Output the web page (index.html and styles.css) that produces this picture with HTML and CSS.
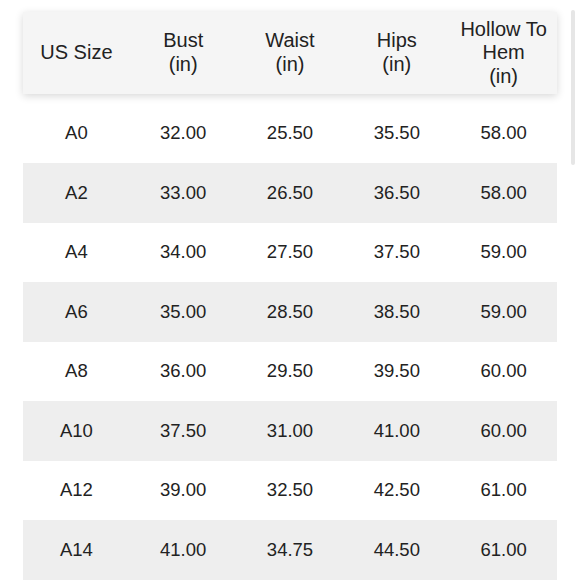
FILE: index.html
```html
<!DOCTYPE html>
<html>
<head>
<meta charset="utf-8">
<link rel="stylesheet" href="styles.css">
</head>
<body>
<div class="page">
  <div class="chart">
    <div class="row head">
      <div class="cell">US Size</div>
      <div class="cell">Bust<br>(in)</div>
      <div class="cell">Waist<br>(in)</div>
      <div class="cell">Hips<br>(in)</div>
      <div class="cell">Hollow To<br>Hem<br>(in)</div>
    </div>
    <div class="body">
      <div class="row"><div class="cell">A0</div><div class="cell">32.00</div><div class="cell">25.50</div><div class="cell">35.50</div><div class="cell">58.00</div></div>
      <div class="row alt"><div class="cell">A2</div><div class="cell">33.00</div><div class="cell">26.50</div><div class="cell">36.50</div><div class="cell">58.00</div></div>
      <div class="row"><div class="cell">A4</div><div class="cell">34.00</div><div class="cell">27.50</div><div class="cell">37.50</div><div class="cell">59.00</div></div>
      <div class="row alt"><div class="cell">A6</div><div class="cell">35.00</div><div class="cell">28.50</div><div class="cell">38.50</div><div class="cell">59.00</div></div>
      <div class="row"><div class="cell">A8</div><div class="cell">36.00</div><div class="cell">29.50</div><div class="cell">39.50</div><div class="cell">60.00</div></div>
      <div class="row alt"><div class="cell">A10</div><div class="cell">37.50</div><div class="cell">31.00</div><div class="cell">41.00</div><div class="cell">60.00</div></div>
      <div class="row"><div class="cell">A12</div><div class="cell">39.00</div><div class="cell">32.50</div><div class="cell">42.50</div><div class="cell">61.00</div></div>
      <div class="row alt"><div class="cell">A14</div><div class="cell">41.00</div><div class="cell">34.75</div><div class="cell">44.50</div><div class="cell">61.00</div></div>
    </div>
  </div>
  <div class="scrollbar"></div>
</div>
</body>
</html>
```

FILE: styles.css
```css
html, body {
  margin: 0;
  padding: 0;
  background: #ffffff;
}
body {
  font-family: "Liberation Sans", Arial, sans-serif;
  color: #222222;
  width: 580px;
  height: 580px;
  overflow: hidden;
}
.page {
  position: relative;
  height: 580px;
  padding: 12px 0 0 23px;
  box-sizing: border-box;
}
.chart {
  width: 534px;
}
.row {
  display: grid;
  grid-template-columns: repeat(5, 1fr);
  height: 59.5px;
}
.row.alt {
  background: #eeeeee;
}
.cell {
  display: flex;
  align-items: center;
  justify-content: center;
  text-align: center;
  font-size: 18.5px;
}
.head {
  height: 81.5px;
  background: #f5f5f5;
  box-shadow: 0 2px 8px rgba(0, 0, 0, 0.16);
  position: relative;
  z-index: 1;
}
.head .cell {
  font-size: 20px;
  line-height: 23.5px;
}
.body {
  margin-top: 10px;
}
.scrollbar {
  position: absolute;
  left: 571px;
  top: 10px;
  width: 4px;
  height: 155px;
  border-radius: 2px;
  background: #e6e6e6;
}
```
